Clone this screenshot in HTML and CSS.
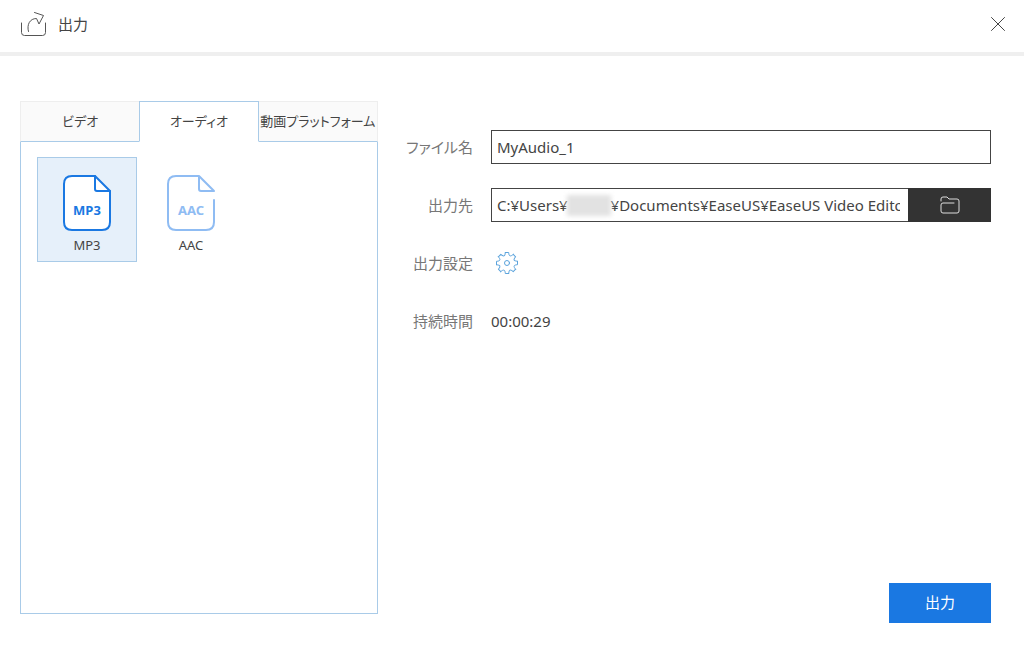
FILE: index.html
```
<!DOCTYPE html>
<html lang="ja">
<head>
  <meta charset="UTF-8">
  <meta name="viewport" content="width=device-width, initial-scale=1">
  <title>出力</title>
  <link rel="stylesheet" href="styles.css">
</head>
<body>
  <header class="title-bar">
    <svg class="title-icon" width="28" height="28" viewBox="0 0 28 28" aria-hidden="true">
      <path d="M1.5 13V22.5Q1.5 25.5 4.5 25.5H22.5Q25.5 25.5 25.5 22.5V13"/>
      <path d="M8.5 21.5C6.5 14.500 10 8.500 16.500 8.500L19 14L23.500 5.500L14.500 2.500"/>
    </svg>
    <h1>出力</h1>
    <button type="button" class="close-btn" aria-label="閉じる">
      <svg width="16" height="16" viewBox="0 0 16 16" aria-hidden="true"><path d="M1.5 1.5L14.5 14.5M14.5 1.5L1.5 14.5"/></svg>
    </button>
  </header>

  <main class="content">
    <!-- Format picker -->
    <section class="formats">
      <div class="tabs" role="tablist">
        <button type="button" class="tab" role="tab" aria-selected="false">ビデオ</button>
        <button type="button" class="tab active" role="tab" aria-selected="true">オーディオ</button>
        <button type="button" class="tab" role="tab" aria-selected="false">動画プラットフォーム</button>
      </div>
      <div class="format-list" role="tabpanel">
        <button type="button" class="format selected">
          <svg width="50" height="58" viewBox="0 0 50 58" aria-hidden="true">
            <path class="sheet" d="M33 2H10Q2 2 2 10V48Q2 56 10 56H40Q48 56 48 48V17L33 2Z"/>
            <path d="M33 2V15Q33 17 35 17H48"/>
            <text x="25" y="41">MP3</text>
          </svg>
          <span>MP3</span>
        </button>
        <button type="button" class="format">
          <svg width="50" height="58" viewBox="0 0 50 58" aria-hidden="true">
            <path d="M48 26V48Q48 56 40 56H10Q2 56 2 48V10Q2 2 10 2H33L48 17H35Q33 17 33 15V2"/>
            <text x="25" y="41">AAC</text>
          </svg>
          <span>AAC</span>
        </button>
      </div>
    </section>

    <!-- Output options -->
    <form class="options">
      <div class="fields">
        <label for="fileName">ファイル名</label>
        <input type="text" id="fileName" value="MyAudio_1">

        <label for="folder">出力先</label>
        <div class="folder-row">
          <div class="path-box">
            <input type="text" id="folder" value="C:¥Users¥&#160;&#160;&#160;&#160;&#160;&#160;&#160;&#160;&#160;&#160;&#160;¥Documents¥EaseUS¥EaseUS Video Editor">
            <span class="user-mask"></span>
          </div>
          <button type="button" class="browse-btn" aria-label="参照">
            <svg width="22" height="20" viewBox="0 0 22 20" aria-hidden="true">
              <path d="M2 6V4Q2 2 4 2H8L10 4H18Q20 4 20 6V16Q20 18 18 18H4Q2 18 2 16V10Q2 8 4 8H15"/>
            </svg>
          </button>
        </div>

        <label for="settings">出力設定</label>
        <button type="button" id="settings" class="settings-btn">
          <svg width="24" height="24" viewBox="0 0 24 24" aria-hidden="true">
            <defs>
              <path id="tooth" d="M10.300 1.500H13.700C13.900 5.400 15.300 6 18.200 3.400"/>
            </defs>
            <use href="#tooth"/>
            <use href="#tooth" transform="rotate(45 12 12)"/>
            <use href="#tooth" transform="rotate(90 12 12)"/>
            <use href="#tooth" transform="rotate(135 12 12)"/>
            <use href="#tooth" transform="rotate(180 12 12)"/>
            <use href="#tooth" transform="rotate(225 12 12)"/>
            <use href="#tooth" transform="rotate(270 12 12)"/>
            <use href="#tooth" transform="rotate(315 12 12)"/>
            <circle cx="12" cy="12" r="2.500"/>
          </svg>
        </button>

        <span class="caption">持続時間</span>
        <span class="duration">00:00:29</span>
      </div>
      <button type="button" class="export-btn">出力</button>
    </form>
  </main>
</body>
</html>
```
FILE: styles.css
```
* {
  box-sizing: border-box;
}

body {
  display: flex;
  flex-direction: column;
  min-height: 100vh;
  margin: 0;
  background: #fff;
  color: #444;
  font-family: "Noto Sans", "Noto Sans CJK JP", sans-serif;
  font-size: 15px;
  font-feature-settings: "palt";
}

button,
input {
  font: inherit;
  font-feature-settings: inherit;
  color: inherit;
}

button {
  padding: 0;
  border: none;
  background: none;
  cursor: pointer;
}

svg {
  display: block;
  fill: none;
  stroke: currentColor;
  stroke-linejoin: round;
  stroke-linecap: round;
}

/* Title bar */
.title-bar {
  display: flex;
  align-items: center;
  gap: 10px;
  height: 56px;
  padding: 0 18px 4px 20px;
  border-bottom: 4px solid #efefef;
}

.title-icon {
  color: #555;
}

h1 {
  flex: 1;
  margin: 0;
  padding-bottom: 2px;
  font-size: 15px;
  font-weight: 400;
}

/* Two columns below the title bar */
.content {
  display: flex;
  flex: 1;
  gap: 34px;
  padding: 45px 33px 33px 20px;
}

.formats {
  display: flex;
  flex-direction: column;
  flex: 0 0 358px;
  margin-bottom: 9px;
}

.tabs {
  display: grid;
  grid-template-columns: repeat(3, 1fr);
}

.tab {
  height: 41px;
  min-width: 0;
  padding-bottom: 2px;
  border: 1px solid #eee;
  border-bottom-color: #a9cbe8;
  background: #fafafa;
  font-size: 13px;
  white-space: nowrap;
}

.tab:first-child {
  border-right: none;
}

.tab:last-child {
  border-left: none;
}

.tab.active {
  border-color: #a9cbe8;
  border-bottom-color: #fff;
  background: #fff;
}

.format-list {
  display: flex;
  flex: 1;
  align-items: flex-start;
  gap: 4px;
  padding: 15px 16px;
  border: 1px solid #a9cbe8;
  border-top: none;
}

.format {
  display: flex;
  flex-direction: column;
  align-items: center;
  gap: 4px;
  width: 100px;
  height: 105px;
  padding-top: 16px;
  border: 1px solid transparent;
  font-size: 13px;
  line-height: 18px;
}

.format.selected {
  border-color: #a9cbe8;
  background: #e6f0fa;
}

.format svg {
  color: #8fbcf3;
  stroke-width: 2;
}

.format.selected svg {
  color: #1a78e2;
}

.format .sheet {
  fill: #fff;
}

.format text {
  fill: currentColor;
  stroke: none;
  font-size: 13px;
  font-weight: 700;
  text-anchor: middle;
}

/* Output options */
.options {
  display: flex;
  flex: 1;
  flex-direction: column;
  justify-content: space-between;
  min-width: 0;
  padding-top: 29px;
}

.fields {
  display: grid;
  grid-template-columns: 61px minmax(0, 1fr);
  grid-auto-rows: 34px;
  gap: 24px 18px;
  align-items: center;
}

.fields label,
.caption {
  justify-self: end;
  padding-bottom: 2px;
  color: #777;
  white-space: nowrap;
}

.fields input {
  width: 100%;
  height: 34px;
  padding: 0 5px;
  border: 1px solid #444;
  border-radius: 0;
  background: #fff;
}

.folder-row {
  display: flex;
}

.path-box {
  position: relative;
  flex: 1;
  min-width: 0;
}

.path-box input {
  padding-right: 8px;
  border-right: none;
}

/* Hides the account name in the path */
.user-mask {
  position: absolute;
  top: 7px;
  left: 76px;
  width: 44px;
  height: 21px;
  background: #e2e2e2;
  filter: blur(2px);
}

.browse-btn {
  display: flex;
  align-items: center;
  justify-content: center;
  width: 83px;
  height: 34px;
  background: #333;
  color: #ddd;
}

.settings-btn {
  justify-self: start;
  margin-left: 4px;
  color: #5ba3dc;
}

.export-btn {
  align-self: flex-end;
  width: 102px;
  height: 40px;
  padding-bottom: 3px;
  background: #1a78e2;
  color: #fff;
}
```
